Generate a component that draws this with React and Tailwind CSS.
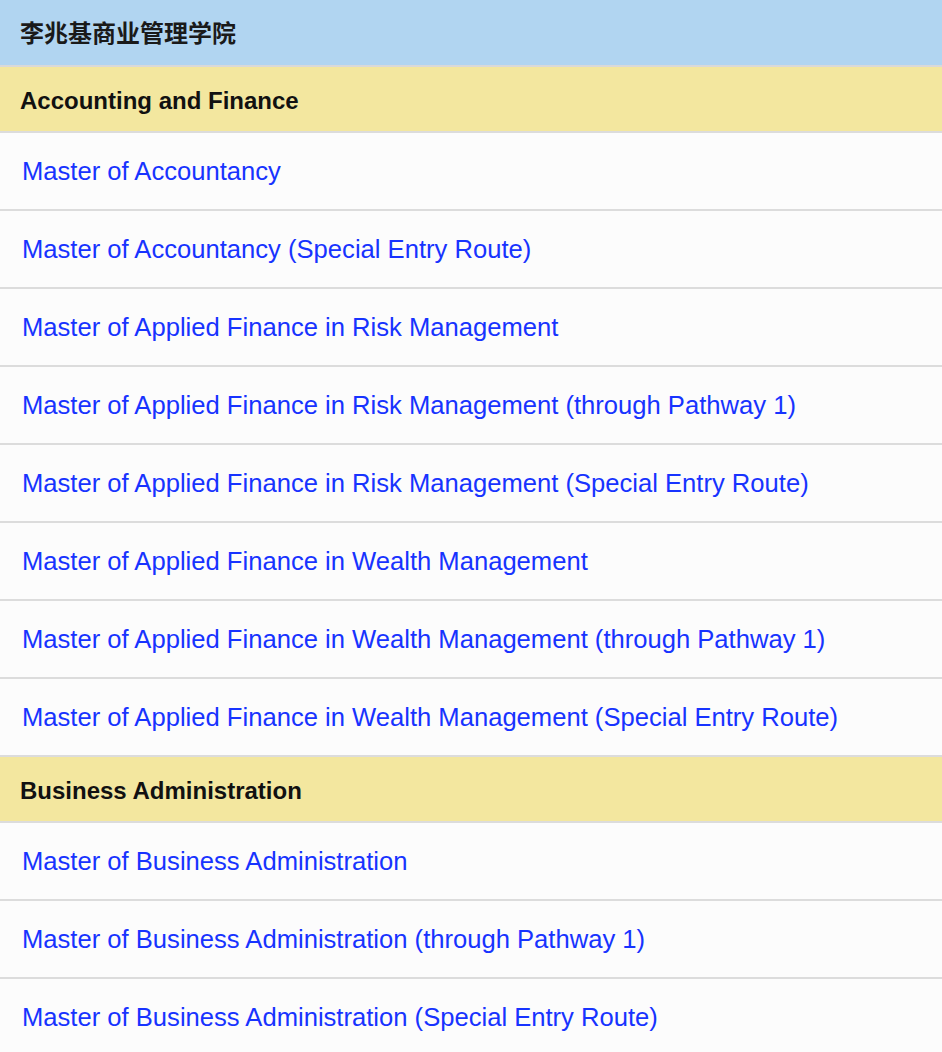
const sections = [
  {
    title: "Accounting and Finance",
    items: [
      "Master of Accountancy",
      "Master of Accountancy (Special Entry Route)",
      "Master of Applied Finance in Risk Management",
      "Master of Applied Finance in Risk Management (through Pathway 1)",
      "Master of Applied Finance in Risk Management (Special Entry Route)",
      "Master of Applied Finance in Wealth Management",
      "Master of Applied Finance in Wealth Management (through Pathway 1)",
      "Master of Applied Finance in Wealth Management (Special Entry Route)",
    ],
  },
  {
    title: "Business Administration",
    items: [
      "Master of Business Administration",
      "Master of Business Administration (through Pathway 1)",
      "Master of Business Administration (Special Entry Route)",
    ],
  },
];

export default function App() {
  return (
    <div
      className="w-[942px] h-[1052px] overflow-hidden bg-[#fcfcfc]"
      style={{ fontFamily: '"Liberation Sans", Arial, "Noto Sans CJK SC", sans-serif' }}
    >
      <div className="h-[67px] bg-[#b1d5f1] flex items-center pl-[20px] pb-[2px] border-b-2 border-[#d9d9d9]">
        <span className="text-[24px] font-bold text-[#1a1a1a] leading-none" style={{ fontFamily: '"Noto Sans CJK SC", sans-serif' }}>
          李兆基商业管理学院
        </span>
      </div>
      {sections.map((s) => (
        <div key={s.title}>
          <div className="h-[66px] bg-[#f3e79f] flex items-center pl-[20px] pt-[3px] border-b-2 border-[#dcdcdc]">
            <span className="text-[24px] font-bold text-[#111] leading-none">{s.title}</span>
          </div>
          {s.items.map((it) => (
            <div key={it} className="h-[78px] flex items-center pl-[22px] pt-[2px] border-b-2 border-[#dcdcdc]">
              <a href="#" className="text-[25.6px] text-[#1733ff] leading-none">{it}</a>
            </div>
          ))}
        </div>
      ))}
    </div>
  );
}
